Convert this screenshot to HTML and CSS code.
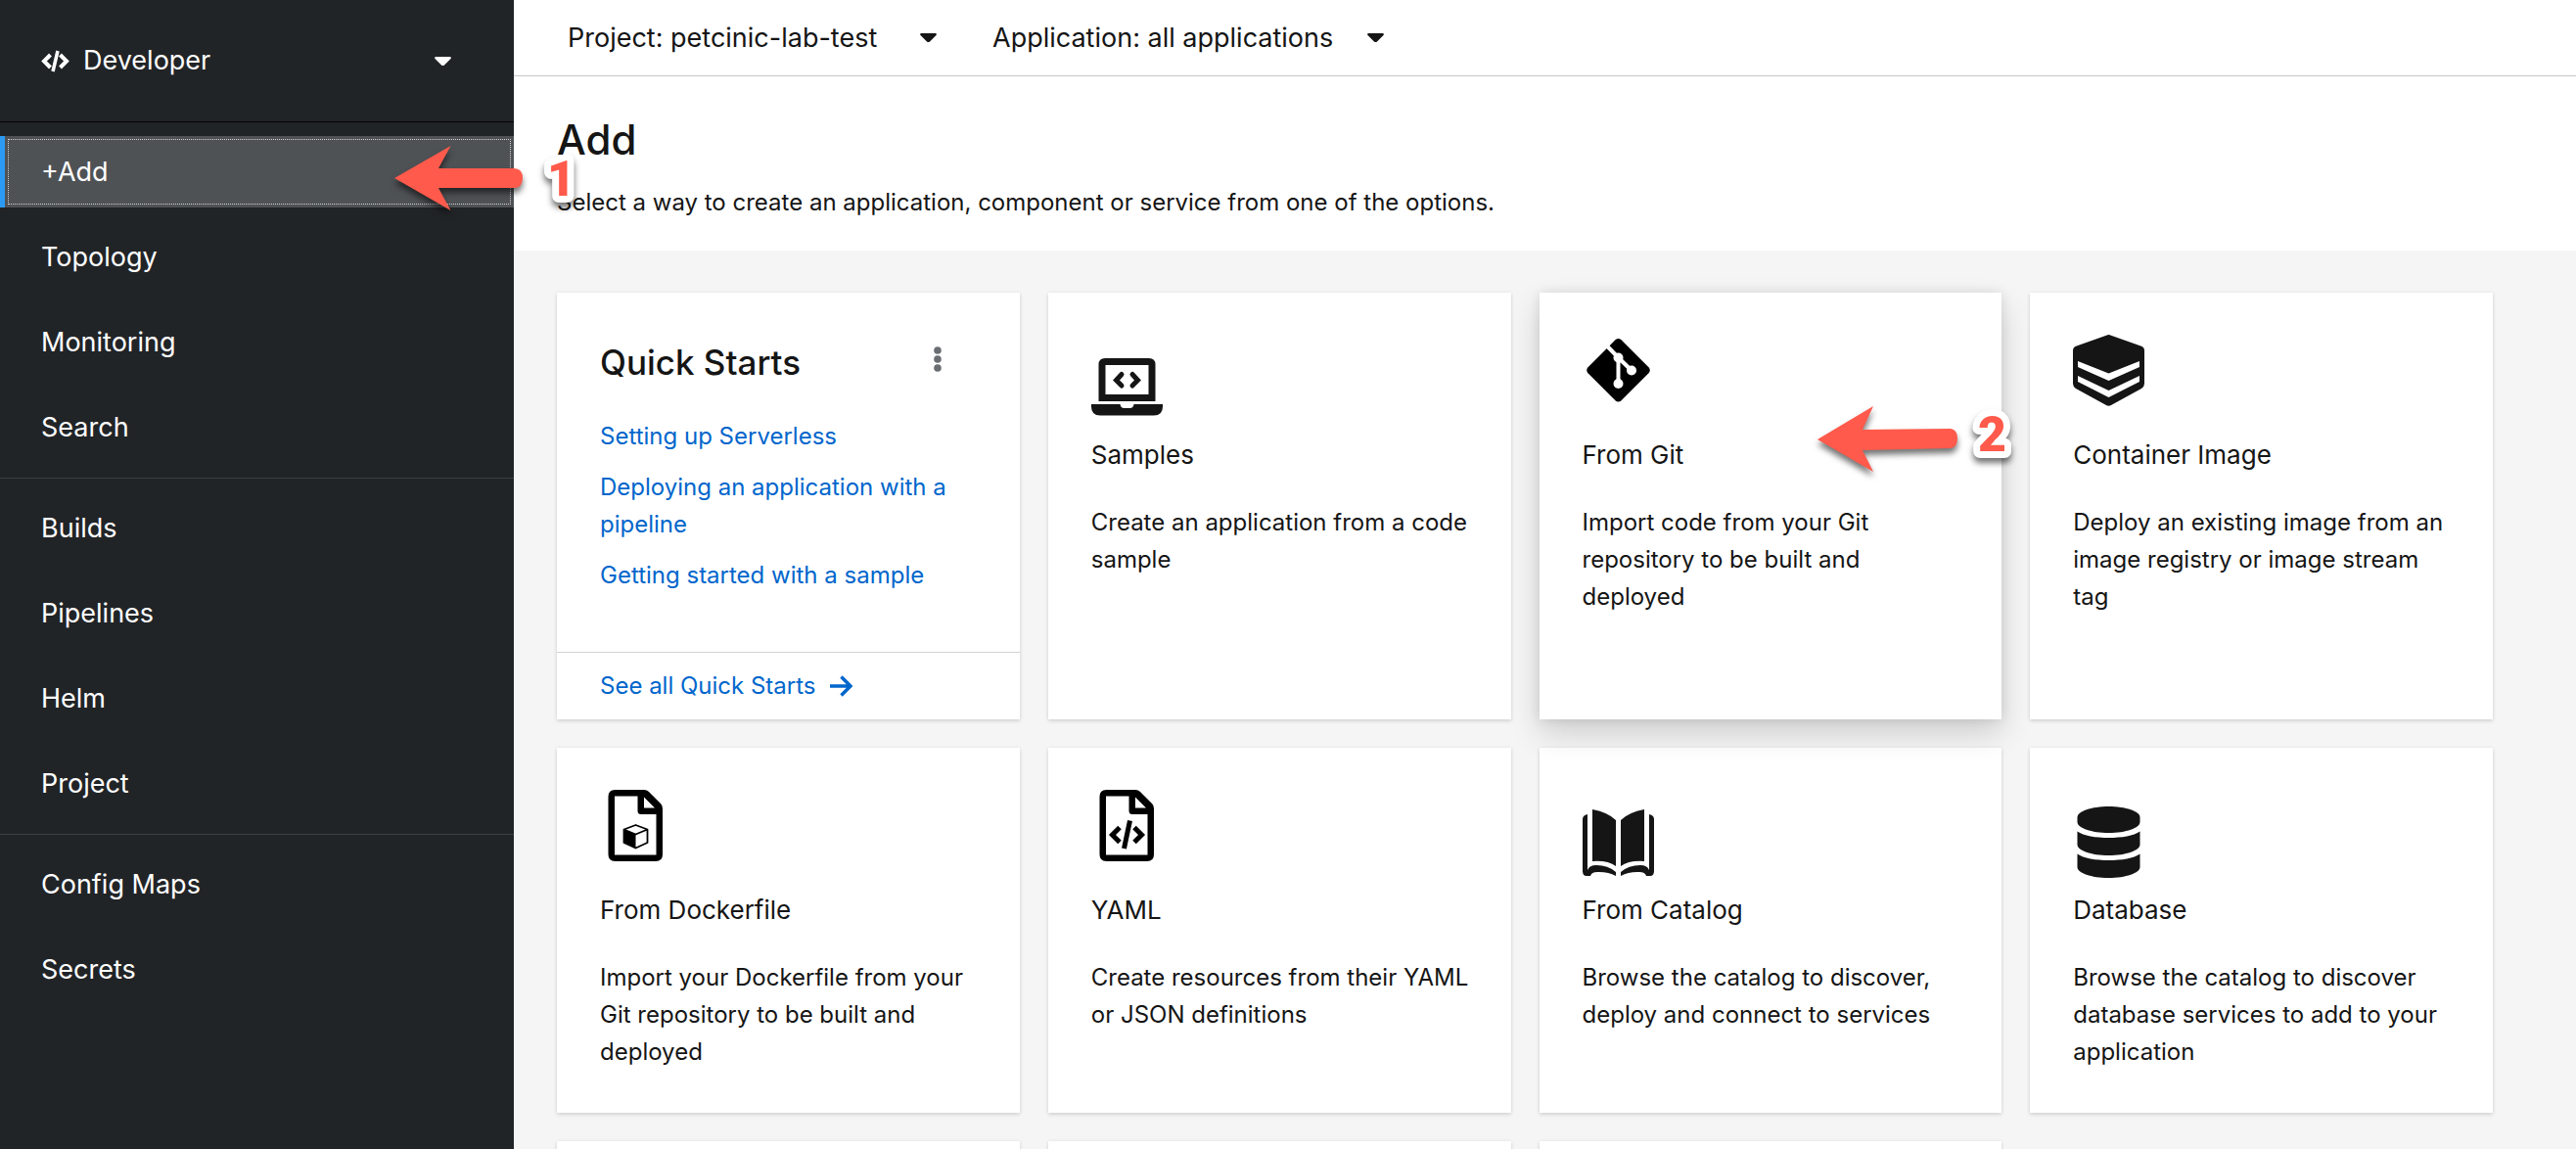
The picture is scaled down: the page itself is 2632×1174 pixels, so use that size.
FILE: index.html
```html
<!DOCTYPE html>
<html lang="en">
<head>
<meta charset="utf-8">
<meta name="viewport" content="width=device-width, initial-scale=1">
<title>Add</title>
<link rel="stylesheet" href="styles.css">
</head>
<body>
<div class="page">
  <nav class="sidebar" aria-label="Main">
    <div class="perspective">
      <button type="button" class="perspective-toggle">
        <svg class="perspective-icon line" viewBox="0 0 29 23" stroke-width="4" aria-hidden="true"><path d="M9.500 5 3 11.500l6.500 6.500M19.500 5 26 11.500l-6.500 6.500"/><path d="M17 1 12 22" stroke-width="3.500"/></svg>
        <span class="perspective-name">Developer</span>
        <svg class="caret" viewBox="0 0 17 9" aria-hidden="true"><path d="M1 0h15q1.500.5.5 2L10 8.400q-1.500 1.200-3 0L.5 2Q-.5.5 1 0z"/></svg>
      </button>
    </div>
    <ul class="nav-section">
      <li class="nav-item current">
        <a class="nav-link" href="#add" aria-current="page">+Add</a>
        <svg class="callout callout-one" viewBox="0 0 190 68" aria-label="Step 1">
          <path class="callout-arrow" d="M0 33 57.500 0 45 23h77q9 0 9 10t-9 10H45l12.500 23z"/>
          <text class="callout-number" x="156" y="51">1</text>
        </svg>
      </li>
      <li class="nav-item"><a class="nav-link" href="#topology">Topology</a></li>
      <li class="nav-item"><a class="nav-link" href="#monitoring">Monitoring</a></li>
      <li class="nav-item"><a class="nav-link" href="#search">Search</a></li>
    </ul>
    <ul class="nav-section">
      <li class="nav-item"><a class="nav-link" href="#builds">Builds</a></li>
      <li class="nav-item"><a class="nav-link" href="#pipelines">Pipelines</a></li>
      <li class="nav-item"><a class="nav-link" href="#helm">Helm</a></li>
      <li class="nav-item"><a class="nav-link" href="#project">Project</a></li>
    </ul>
    <ul class="nav-section">
      <li class="nav-item"><a class="nav-link" href="#configmaps">Config Maps</a></li>
      <li class="nav-item"><a class="nav-link" href="#secrets">Secrets</a></li>
    </ul>
  </nav>

  <main class="main">
    <div class="toolbar">
      <button type="button" class="dropdown">Project: petcinic-lab-test
        <svg class="caret" viewBox="0 0 17 9" aria-hidden="true"><path d="M1 0h15q1.500.5.5 2L10 8.400q-1.500 1.200-3 0L.5 2Q-.5.5 1 0z"/></svg>
      </button>
      <button type="button" class="dropdown">Application: all applications
        <svg class="caret" viewBox="0 0 17 9" aria-hidden="true"><path d="M1 0h15q1.500.5.5 2L10 8.400q-1.500 1.200-3 0L.5 2Q-.5.5 1 0z"/></svg>
      </button>
    </div>

    <header class="heading">
      <h1 class="heading-title">Add</h1>
      <p class="heading-text">Select a way to create an application, component or service from one of the options.</p>
    </header>

    <div class="gallery">
      <section class="card quick">
        <div class="quick-head">
          <h2 class="quick-title">Quick Starts</h2>
          <button type="button" class="kebab" aria-label="Actions">
            <svg class="kebab-icon" viewBox="0 0 8 26" aria-hidden="true"><circle cx="4" cy="4" r="3.800"/><circle cx="4" cy="13" r="3.800"/><circle cx="4" cy="22" r="3.800"/></svg>
          </button>
        </div>
        <div class="quick-links">
          <a class="link" href="#serverless">Setting up Serverless</a>
          <a class="link" href="#pipeline">Deploying an application with a pipeline</a>
          <a class="link" href="#sample">Getting started with a sample</a>
        </div>
        <div class="quick-foot">
          <a class="link link-all" href="#quickstarts">See all Quick Starts
            <svg class="arrow line" viewBox="0 0 23 22" stroke-width="3.500" aria-hidden="true"><path d="M0 11h20M11.500 1.500 21 11l-9.500 9.500"/></svg>
          </a>
        </div>
      </section>

      <a class="card tile" href="#samples">
        <span class="tile-icon low">
          <svg class="icon" viewBox="0 0 73 73" aria-hidden="true">
            <path fill-rule="evenodd" d="M14 7h45q6.500 0 6.500 6.500V51h-58V13.500Q7.500 7 14 7zm.5 7v30h44V14z"/>
            <path d="M0 54h29.500q.5 4 4 4h6q3.500 0 4-4H73v2.500q0 9-9 9H9q-9 0-9-9z"/>
            <path fill="none" stroke="currentColor" stroke-width="5" stroke-linecap="round" d="M31 23.500 25.500 29.500l5.500 5.500M42 23.500l5.500 6-5.500 5.500"/>
          </svg>
        </span>
        <span class="tile-title">Samples</span>
        <span class="tile-text">Create an application from a code sample</span>
      </a>

      <div class="tile-wrap">
        <a class="card tile hovered" href="#git">
          <span class="tile-icon">
            <svg class="icon black" viewBox="0 0 73 73" aria-hidden="true">
              <path d="M33.500 5.300q3-2.600 6 0l28 28q2.600 3 0 6l-28 28q-3 2.600-6 0l-28-28q-2.600-3 0-6z"/>
              <g fill="#fff" stroke="#fff" stroke-width="4"><path d="M24.500 11 36.500 23.500 50 36.500M36.500 23.500V50"/><g stroke="none"><circle cx="36.500" cy="23.500" r="5"/><circle cx="50" cy="36.500" r="5"/><circle cx="36.500" cy="50" r="5"/></g></g>
            </svg>
          </span>
          <span class="tile-title">From Git</span>
          <span class="tile-text">Import code from your Git repository to be built and deployed</span>
        </a>
        <svg class="callout callout-two" viewBox="0 0 190 68" aria-label="Step 2">
          <path class="callout-arrow" d="M0 34 57 0 46 24l90-1q7 1 7 10t-7 10l-90 2 11 22z"/>
          <text class="callout-number" x="164" y="46">2</text>
        </svg>
      </div>

      <a class="card tile" href="#image">
        <span class="tile-icon">
          <svg class="icon" viewBox="0 0 73 73" aria-hidden="true">
            <path d="M34 .7q2.500-1.200 5 0l31 11q3 1.300 3 4.300v34q0 3-3 5L39 72q-2.500 1.500-5 0L3 55q-3-2-3-5V16q0-3 3-4.300z"/>
            <path fill="#fff" d="M5 27v6l31.500 14L68 33v-6L36.500 39.500zM5 42v6l31.500 16L68 48v-6L36.500 57z"/>
          </svg>
        </span>
        <span class="tile-title">Container Image</span>
        <span class="tile-text">Deploy an existing image from an image registry or image stream tag</span>
      </a>

      <a class="card tile" href="#dockerfile">
        <span class="tile-icon">
          <svg class="icon black" viewBox="0 0 73 73" aria-hidden="true">
            <path fill-rule="evenodd" d="M15.500 0H45q3 0 5 2l12 12q2 2 2 5v47q0 7-7 7H15.500q-7 0-7-7V7q0-7 7-7zm-.5 6.500v60h42.500V25H42q-3.500 0-3.500-3.500v-15zm30 1V18.500h11z"/>
            <path fill="none" stroke="currentColor" stroke-width="1.800" stroke-linejoin="round" d="M36.500 36 48.500 40.500V54L36.500 59.500 24.500 54V40.500zM24.500 40.500l12 5 12-5"/>
            <path d="M24 40.500 36.500 45.500V60L24 54z"/>
          </svg>
        </span>
        <span class="tile-title">From Dockerfile</span>
        <span class="tile-text">Import your Dockerfile from your Git repository to be built and deployed</span>
      </a>

      <a class="card tile" href="#yaml">
        <span class="tile-icon">
          <svg class="icon black" viewBox="0 0 73 73" aria-hidden="true">
            <path fill-rule="evenodd" d="M15.500 0H45q3 0 5 2l12 12q2 2 2 5v47q0 7-7 7H15.500q-7 0-7-7V7q0-7 7-7zm-.5 6.500v60h42.500V25H42q-3.500 0-3.500-3.500v-15zm30 1V18.500h11z"/>
            <path fill="none" stroke="currentColor" stroke-width="5" d="M29 38.500l-7.500 7.500 7.500 7.500M44 38.500l7.500 7.500-7.500 7.500M39.500 31.500 33.500 60"/>
          </svg>
        </span>
        <span class="tile-title">YAML</span>
        <span class="tile-text">Create resources from their YAML or JSON definitions</span>
      </a>

      <a class="card tile" href="#catalog">
        <span class="tile-icon low">
          <svg class="icon" viewBox="0 0 73 73" aria-hidden="true">
            <g id="leaf"><path d="M10 3q16 3 24 11v47q-8-6-24-5z"/><path d="M5 8Q0 9 0 13v53q0 5 4 5h4q1-4 7-4 11-.5 19 4v-4q-8-7-20-7-7 0-9 5z"/></g>
            <use href="#leaf" transform="translate(73 0) scale(-1 1)"/>
          </svg>
        </span>
        <span class="tile-title">From Catalog</span>
        <span class="tile-text">Browse the catalog to discover, deploy and connect to services</span>
      </a>

      <a class="card tile" href="#database">
        <span class="tile-icon low">
          <svg class="icon" viewBox="0 0 73 73" aria-hidden="true">
            <path d="M4.500 11C4.500 5 19 0 36.500 0s32 5 32 11v5c0 6-14.500 11-32 11s-32-5-32-11z"/>
            <path d="M4.500 25.500C11 30 23 32 36.500 32S62 30 68.500 25.500V39c0 6-14.500 11-32 11s-32-5-32-11z"/>
            <path d="M4.500 48.500C11 53 23 55 36.500 55S62 53 68.500 48.500V62c0 6-14.500 11-32 11s-32-5-32-11z"/>
          </svg>
        </span>
        <span class="tile-title">Database</span>
        <span class="tile-text">Browse the catalog to discover database services to add to your application</span>
      </a>

      <div class="card"></div>
      <div class="card"></div>
      <div class="card"></div>
    </div>
  </main>
</div>
</body>
</html>
```

FILE: styles.css
```css
* {
  box-sizing: border-box;
}

body {
  margin: 0;
  font-family: Inter, "Open Sans", sans-serif;
  font-size: 24px;
  line-height: 38px;
  color: #151515;
  background: #f5f5f5;
}

h1, h2, p, ul {
  margin: 0;
  padding: 0;
}

ul {
  list-style: none;
}

button {
  border: 0;
  padding: 0;
  background: none;
  color: inherit;
  font: inherit;
  cursor: pointer;
}

a {
  color: inherit;
  text-decoration: none;
}

svg {
  display: block;
  fill: currentColor;
}

.line {
  fill: none;
  stroke: currentColor;
}

.page {
  display: grid;
  grid-template-columns: 525px minmax(0, 1fr);
  height: 100vh;
}

/* Sidebar */

.sidebar {
  position: relative;
  z-index: 2;
  background: #212427;
  color: #fff;
  font-size: 27px;
}

.perspective {
  display: flex;
  height: 125px;
  padding: 0 64px 0 42px;
  border-bottom: 1px solid #030303;
}

.perspective-toggle {
  display: flex;
  flex: 1;
  align-items: center;
}

.perspective-icon {
  width: 29px;
  height: 23px;
  margin-right: 14px;
}

.caret {
  width: 17px;
  height: 9px;
  margin-left: auto;
}

.nav-section {
  display: flex;
  flex-direction: column;
  gap: 14px;
  padding: 14px 0 15px;
}

.nav-section + .nav-section {
  border-top: 1px solid #3c3f42;
}

.nav-item {
  position: relative;
  border-left: 5px solid transparent;
}

.nav-item.current {
  border-color: #2b9af3;
  background: #4f5255;
}

.nav-link {
  display: block;
  padding: 18px 37px 17px;
}

.current .nav-link {
  outline: 1px dotted #d2d2d2;
  outline-offset: -4px;
}

/* Numbered step markers */

.callout {
  position: absolute;
  width: 190px;
  height: 68px;
  overflow: visible;
  pointer-events: none;
  filter: drop-shadow(0 5px 3px rgba(0, 0, 0, 0.55));
}

.callout-one {
  left: 398px;
  top: 10px;
}

.callout-two {
  left: 284px;
  top: 116px;
}

.callout-arrow {
  fill: #ff5a4b;
}

.callout-number {
  font: 900 50px Roboto, sans-serif;
  fill: #ff5a4b;
  stroke: #fff;
  stroke-width: 14px;
  stroke-linejoin: round;
  paint-order: stroke;
}

/* Main column */

.main {
  overflow: hidden;
}

.toolbar {
  display: flex;
  gap: 57px;
  height: 78px;
  padding: 0 55px;
  border-bottom: 1px solid #c7c7c7;
  background: #fff;
  font-size: 27px;
}

.dropdown {
  display: flex;
  align-items: center;
  gap: 35px;
  min-width: 377px;
}

.heading {
  padding: 37px 44px 30px;
  background: #fff;
}

.heading-title {
  margin-bottom: 17px;
  font-size: 42px;
  font-weight: 500;
  line-height: 56px;
}

.gallery {
  display: grid;
  grid-template-columns: repeat(4, minmax(0, 1fr));
  grid-template-rows: 436px;
  grid-auto-rows: minmax(373px, auto);
  gap: 29px;
  padding: 43px 85px 43px 44px;
}

.card {
  display: flex;
  flex-direction: column;
  background: #fff;
  box-shadow: 0 2px 4px rgba(3, 3, 3, 0.12), 0 0 4px rgba(3, 3, 3, 0.06);
}

.tile {
  padding: 43px 38px 43px 44px;
}

.tile-wrap {
  display: grid;
  position: relative;
  z-index: 1;
}

.hovered {
  box-shadow: 0 14px 29px rgba(3, 3, 3, 0.16), 0 0 11px rgba(3, 3, 3, 0.1);
}

.tile-icon {
  display: flex;
  align-items: flex-start;
  height: 90px;
  margin-bottom: 11px;
}

.tile-icon.low {
  align-items: flex-end;
}

.icon {
  width: 73px;
  height: 73px;
}

.black {
  color: #000;
}

.tile-title {
  margin-bottom: 28px;
  font-size: 26px;
  line-height: 44px;
}

/* Quick starts card */

.quick-head {
  display: flex;
  align-items: center;
  justify-content: space-between;
  padding: 43px 80px 0 44px;
}

.quick-title {
  font-size: 35px;
  font-weight: 500;
  line-height: 56px;
}

.kebab-icon {
  width: 8px;
  height: 26px;
  margin-bottom: 6px;
  fill: #6a6e73;
}

.quick-links {
  display: flex;
  flex: 1;
  flex-direction: column;
  gap: 14px;
  padding: 29px 44px 0;
}

.link {
  color: #06c;
}

.link-all {
  display: flex;
  align-items: center;
  gap: 14px;
}

.quick-foot {
  padding: 15px 44px;
  border-top: 1px solid #d2d2d2;
}

.arrow {
  width: 23px;
  height: 22px;
}
```
